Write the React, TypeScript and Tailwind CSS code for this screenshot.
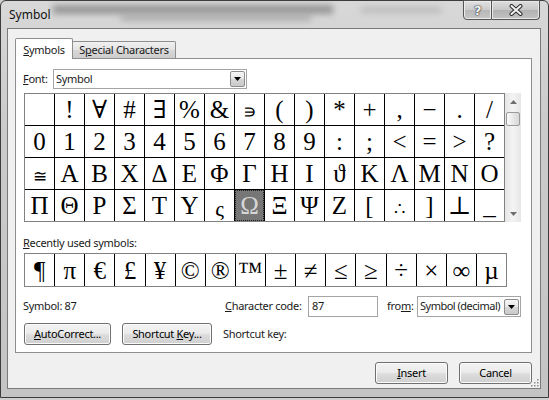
import React from "react";

const serif = "font-['Liberation_Serif','DejaVu_Serif',serif]";

const grid: string[][] = [
  ["", "!", "∀", "#", "∃", "%", "&", "∍", "(", ")", "*", "+", ",", "−", ".", "/"],
  ["0", "1", "2", "3", "4", "5", "6", "7", "8", "9", ":", ";", "<", "=", ">", "?"],
  ["≅", "Α", "Β", "Χ", "Δ", "Ε", "Φ", "Γ", "Η", "Ι", "ϑ", "Κ", "Λ", "Μ", "Ν", "Ο"],
  ["Π", "Θ", "Ρ", "Σ", "Τ", "Υ", "ς", "Ω", "Ξ", "Ψ", "Ζ", "[", "∴", "]", "⊥", "_"],
];
const recent = ["¶", "π", "€", "£", "¥", "©", "®", "™", "±", "≠", "≤", "≥", "÷", "×", "∞", "µ"];

function Arrow({ up = false, color = "#000" }: { up?: boolean; color?: string }) {
  return (
    <svg width="7" height="4" viewBox="0 0 7 4">
      <path d={up ? "M0 4h7L3.5 0z" : "M0 0h7L3.5 4z"} fill={color} />
    </svg>
  );
}

function DropBtn() {
  return (
    <div className="shrink-0 w-[15px] h-[16px] border border-[#8d8d8d] rounded-[2px] bg-[linear-gradient(#f6f6f6,#e6e6e6_50%,#d6d6d6_50%,#cacaca)] flex items-center justify-center">
      <Arrow />
    </div>
  );
}

const btn =
  "h-[22px] border border-[#707070] rounded-[3px] bg-[linear-gradient(#f3f3f3,#ebebeb_45%,#dcdcdc_55%,#cfcfcf)] shadow-[inset_0_0_0_1px_#fbfbfb] flex items-center justify-center text-black whitespace-nowrap";

function cellSize(ch: string) {
  if (ch === "≅") return "text-[17px] pt-[6px]";
  if (ch === "∍") return "text-[19px] pt-[3px]";
  if (ch === "∴") return "text-[18px] pt-[6px]";
  if (ch === "ς") return "text-[22px] pt-[6px]";
  return "text-[25px]";
}

export default function App() {
  return (
    <div className="w-[549px] h-[400px] bg-[#cfcfcf] overflow-hidden font-['Noto_Sans','Open_Sans',sans-serif] text-[11px] tracking-[-0.3px] text-[#1a1a1a] whitespace-nowrap">
      <div className="w-full h-[398px] border border-[#3c3c3c] rounded-t-[6px] bg-[linear-gradient(#d8d8d8,#cbcbcb_30%,#c4c4c4)] flex flex-col relative">
        {/* title bar */}
        <div className="h-[27px] shrink-0 flex items-start relative">
          <div className="absolute left-[52px] top-[4px] w-[280px] h-[9px] bg-[#7c7c7c] blur-[3px] opacity-70" />
          <div className="absolute left-[120px] top-[14px] w-[190px] h-[6px] bg-[#929292] blur-[3px] opacity-60" />
          <div className="absolute left-[360px] top-[6px] w-[80px] h-[6px] bg-[#a0a0a0] blur-[3px] opacity-50" />
          <span className="relative pl-[8px] pt-[6px] leading-[16px] text-[12px] tracking-normal text-[#111]">Symbol</span>
          <div className="relative ml-auto mr-[8px] flex -mt-px">
            <div className="w-[29px] h-[20px] border border-[#555] rounded-bl-[4px] bg-[linear-gradient(#e2e2e2,#cacaca_50%,#b8b8b8_50%,#c6c6c6)] shadow-[inset_0_0_0_1px_#ececec] flex items-center justify-center">
              <span className="font-['DejaVu_Sans',sans-serif] text-[13px] font-bold leading-none text-[#f4f4f4] [text-shadow:0_0_2px_#222,0_0_1px_#222]">?</span>
            </div>
            <div className="w-[48px] h-[20px] border border-l-0 border-[#555] rounded-br-[4px] bg-[linear-gradient(#dedede,#c6c6c6_50%,#b2b2b2_50%,#c2c2c2)] shadow-[inset_0_0_0_1px_#e8e8e8] flex items-center justify-center">
              <svg width="14" height="12" viewBox="0 0 14 12">
                <path d="M2.5 2l9 8M11.5 2l-9 8" stroke="#2a2a2a" strokeWidth="4" strokeLinecap="round" />
                <path d="M2.5 2l9 8M11.5 2l-9 8" stroke="#f2f2f2" strokeWidth="2" strokeLinecap="round" />
              </svg>
            </div>
          </div>
        </div>

        {/* client area */}
        <div className="ml-[6px] mr-[7px] h-[361px] border border-[#7a7a7a] bg-[#f0f0f0] flex flex-col relative">
          {/* tabs */}
          <div className="pl-[7px] pt-[9px] flex items-end h-[30px]">
            <div className="relative z-10 h-[21px] w-[58px] border border-b-0 border-[#8e8e8e] rounded-t-[2px] bg-white flex items-start pt-[3px] justify-center">
              <span>
                <u>S</u>ymbols
              </span>
            </div>
            <div className="h-[17px] mb-[1px] w-[103px] border border-l-0 border-b-0 border-[#8e8e8e] rounded-tr-[2px] bg-[linear-gradient(#f0f0f0,#e3e3e3_50%,#d8d8d8_50%,#cdcdcd)] flex items-center justify-center">
              <span>
                S<u>p</u>ecial Characters
              </span>
            </div>
          </div>

          {/* panel */}
          <div className="ml-[7px] -mt-px w-[517px] h-[295px] border border-[#8e8e8e] bg-white flex flex-col pl-[7px]">
            {/* font row */}
            <div className="mt-[10px] h-[20px] flex items-center">
              <span className="w-[30px]">
                <u>F</u>ont:
              </span>
              <div className="w-[194px] h-[20px] border border-[#a5a5a5] bg-white flex items-center justify-between pl-[2px] pr-[1px]">
                <span>Symbol</span>
                <DropBtn />
              </div>
            </div>

            {/* symbol grid */}
            <div className="mt-[4px] ml-[1px] flex">
              <div className={`w-[481px] h-[129px] border border-[#828282] bg-black grid grid-cols-16 grid-rows-4 gap-px text-black tracking-normal ${serif}`}>
                {grid.flatMap((row, r) =>
                  row.map((ch, c) => {
                    const sel = r === 3 && c === 7;
                    return (
                      <div
                        key={`${r}-${c}`}
                        className={`flex items-center justify-center leading-none ${cellSize(ch)} ${sel ? "bg-[#767676] text-[#d6d6d6] border border-dotted border-[#1a1a1a]" : "bg-white"}`}
                      >
                        {ch}
                      </div>
                    );
                  })
                )}
              </div>
              <div className="w-[16px] h-[129px] bg-[linear-gradient(90deg,#e6e6e6,#f4f4f4_50%,#e6e6e6)] flex flex-col items-center">
                <div className="h-[17px] flex items-center justify-center">
                  <Arrow up color="#707070" />
                </div>
                <div className="mt-[2px] w-[14px] h-[14px] border border-[#9a9a9a] rounded-[2px] bg-[linear-gradient(90deg,#fafafa,#e8e8e8_50%,#d8d8d8)]" />
                <div className="mt-auto h-[17px] flex items-center justify-center">
                  <Arrow color="#707070" />
                </div>
              </div>
            </div>

            {/* recently used */}
            <div className="mt-[13px] h-[16px] leading-[16px]">
              <u>R</u>ecently used symbols:
            </div>
            <div className={`mt-[2px] ml-[1px] w-[483px] h-[34px] border border-[#828282] bg-black grid grid-cols-16 gap-px text-black tracking-normal ${serif}`}>
              {recent.map((ch, i) => (
                <div key={i} className="bg-white flex items-center justify-center text-[25px] leading-none">
                  {ch}
                </div>
              ))}
            </div>

            {/* symbol / character code row */}
            <div className="mt-[9px] h-[21px] flex items-center">
              <span className="w-[202px]">Symbol: 87</span>
              <span className="w-[83px]">
                <u>C</u>haracter code:
              </span>
              <div className="w-[70px] h-[21px] border border-[#a5a5a5] bg-white flex items-center pl-[3px]">87</div>
              <span className="ml-[9px] w-[30px]">
                fro<u>m</u>:
              </span>
              <div className="w-[104px] h-[21px] border border-[#a5a5a5] bg-white flex items-center justify-between pl-[2px] pr-px">
                <span className="tracking-[-0.5px]">Symbol (decimal)</span>
                <DropBtn />
              </div>
            </div>

            {/* buttons row */}
            <div className="mt-[6px] ml-[1px] flex items-center">
              <div className={`${btn} w-[87px]`}>
                <span>
                  <u>A</u>utoCorrect...
                </span>
              </div>
              <div className={`${btn} ml-[11px] w-[90px]`}>
                <span>
                  Shortcut <u>K</u>ey...
                </span>
              </div>
              <span className="ml-[11px]">Shortcut key:</span>
            </div>
          </div>

          {/* bottom buttons */}
          <div className="mt-[9px] ml-[7px] w-[517px] flex justify-end gap-[11px]">
            <div className={`${btn} w-[73px] border-[#5f5f5f]`}>
              <span>
                <u>I</u>nsert
              </span>
            </div>
            <div className={`${btn} w-[73px]`}>Cancel</div>
          </div>

          {/* resize grip */}
          <svg className="absolute right-[1px] bottom-[1px]" width="10" height="10" viewBox="0 0 10 10">
            {[
              [8, 2],
              [8, 5],
              [5, 5],
              [8, 8],
              [5, 8],
              [2, 8],
            ].map(([x, y], i) => (
              <rect key={i} x={x} y={y} width="1.5" height="1.5" fill="#8a8a8a" />
            ))}
          </svg>
        </div>
      </div>
    </div>
  );
}
